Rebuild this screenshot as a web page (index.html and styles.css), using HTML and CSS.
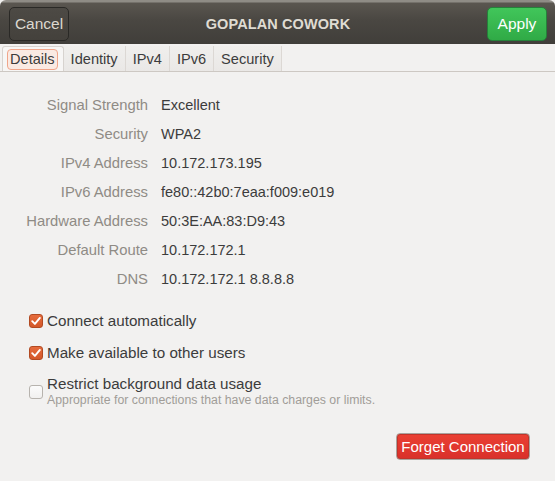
FILE: index.html
```html
<!DOCTYPE html>
<html>
<head>
<meta charset="utf-8">
<link rel="stylesheet" href="styles.css">
</head>
<body>
<div class="window">
  <header class="headerbar">
    <button class="hb-btn cancel">Cancel</button>
    <div class="title">GOPALAN COWORK</div>
    <button class="hb-btn apply">Apply</button>
  </header>
  <nav class="tabs">
    <div class="tab active"><span class="focus">Details</span></div>
    <div class="tab">Identity</div>
    <div class="tab">IPv4</div>
    <div class="tab">IPv6</div>
    <div class="tab">Security</div>
  </nav>
  <main class="content">
    <dl class="details">
      <dt>Signal Strength</dt><dd>Excellent</dd>
      <dt>Security</dt><dd>WPA2</dd>
      <dt>IPv4 Address</dt><dd>10.172.173.195</dd>
      <dt>IPv6 Address</dt><dd>fe80::42b0:7eaa:f009:e019</dd>
      <dt>Hardware Address</dt><dd>50:3E:AA:83:D9:43</dd>
      <dt>Default Route</dt><dd>10.172.172.1</dd>
      <dt>DNS</dt><dd>10.172.172.1 8.8.8.8</dd>
    </dl>
    <div class="checks">
      <label class="check">
        <span class="box checked"><svg viewBox="0 0 14 14" width="14" height="14"><path d="M3.2 7.2 L5.9 9.9 L10.9 3.9" fill="none" stroke="#fff" stroke-width="1.9" stroke-linecap="round" stroke-linejoin="round"/></svg></span>
        <span class="check-text">Connect automatically</span>
      </label>
      <label class="check">
        <span class="box checked"><svg viewBox="0 0 14 14" width="14" height="14"><path d="M3.2 7.2 L5.9 9.9 L10.9 3.9" fill="none" stroke="#fff" stroke-width="1.9" stroke-linecap="round" stroke-linejoin="round"/></svg></span>
        <span class="check-text">Make available to other users</span>
      </label>
      <label class="check multi">
        <span class="box"></span>
        <span class="check-text">Restrict background data usage<small>Appropriate for connections that have data charges or limits.</small></span>
      </label>
    </div>
    <div class="actions">
      <button class="forget">Forget Connection</button>
    </div>
  </main>
</div>
</body>
</html>
```

FILE: styles.css
```css
* { box-sizing: border-box; }
html, body { margin: 0; padding: 0; }
body {
  width: 555px;
  height: 481px;
  overflow: hidden;
  background: #f2f1f0;
  font-family: "Liberation Sans", Arial, sans-serif;
  font-size: 14.5px;
  color: #3c3c3c;
}
.window { display: flex; flex-direction: column; height: 481px; }

.headerbar {
  height: 44px;
  display: flex;
  align-items: center;
  justify-content: space-between;
  padding: 0 8px 0 9px;
  background: linear-gradient(to bottom, #8f8c86 0, #8f8c86 2px, #5a5650 3px, #4a4742 20px, #403e3a 44px);
  border-radius: 6px 6px 0 0;
}
.hb-btn {
  font: inherit;
  font-size: 15.5px;
  height: 34px;
  width: 60px;
  border-radius: 5px;
  padding: 0;
  margin-top: 4px;
}
.cancel {
  background: linear-gradient(#4d4a45, #44413c);
  border: 1px solid #2a2926;
  color: #dcd8cf;
}
.apply {
  background: linear-gradient(#41c65a, #30aa46);
  border: 1px solid #25803a;
  color: #ffffff;
}
.title {
  font-weight: bold;
  font-size: 14.5px;
  letter-spacing: 0.1px;
  color: #dfdbd2;
  margin-top: 4px;
}

.tabs {
  display: flex;
  height: 28px;
  padding: 2px 0 0 2px;
  border-bottom: 1px solid #cdc8c3;
  background: #f2f1f0;
}
.tab {
  display: flex;
  align-items: center;
  padding: 0 7px;
  border-right: 1px solid #dcd8d4;
  background: linear-gradient(#f0efed, #eae8e6);
  color: #3c3c3c;
  height: 25px;
  font-size: 14.6px;
}
.tab.active {
  background: #f7f6f5;
  border: 1px solid #d7d3cf;
  border-bottom: none;
  border-radius: 3px 3px 0 0;
  padding: 0 5px 0 4px;
}
.focus {
  border: 1px solid #f0a58a;
  background: #faeae3;
  border-radius: 4px;
  padding: 0 2px;
  line-height: 19px;
}

.content {
  flex: 1;
  padding: 18px 0 0 0;
  display: flex;
  flex-direction: column;
}
.details {
  display: grid;
  grid-template-columns: 148px 1fr;
  column-gap: 13px;
  margin: 0;
  grid-auto-rows: 29px;
}
.details dt, .details dd {
  margin: 0;
  display: flex;
  align-items: center;
}
.details dt { justify-content: flex-end; color: #8f8b85; font-size: 14.8px; }
.details dd { color: #3c3c3c; }

.checks {
  margin-top: 19px;
  padding-left: 29px;
  display: flex;
  flex-direction: column;
  gap: 14px;
}
.check {
  display: flex;
  align-items: center;
  gap: 4px;
  height: 18px;
  color: #3c3c3c;
  font-size: 15.2px;
}
.check.multi { align-items: flex-start; height: auto; margin-top: -1px; }
.check.multi .box { margin-top: 10px; }
.box {
  width: 14px;
  height: 14px;
  border-radius: 3px;
  border: 1px solid #b7b3ae;
  background: linear-gradient(#fbfbfb, #f1f0ef);
  display: flex;
  align-items: center;
  justify-content: center;
  flex: none;
}
.box.checked {
  background: linear-gradient(#e66b3c, #d4582a);
  border-color: #b24a22;
}
.box svg { display: block; margin: -1px; }
.check-text { display: flex; flex-direction: column; line-height: 18px; }
.check-text small {
  font-size: 12.3px;
  line-height: 14px;
  color: #a19d98;
}

.actions {
  display: flex;
  justify-content: flex-end;
  padding: 26px 25px 0 0;
}
.forget {
  font: inherit;
  font-size: 15px;
  height: 27px;
  width: 134px;
  padding: 0;
  color: #ffffff;
  background: linear-gradient(#ea4033, #d9302a);
  border: 1px solid #a9a39e;
  border-radius: 4px;
  box-shadow: inset 0 0 0 1px #c2342b;
}
```
